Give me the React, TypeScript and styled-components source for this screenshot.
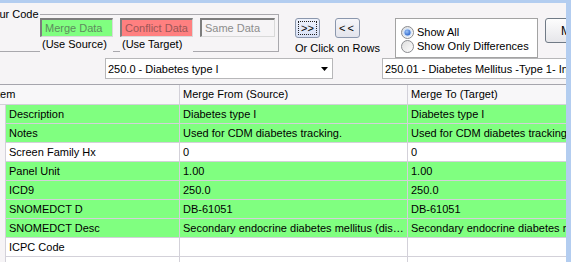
import React from 'react';
import styled, { createGlobalStyle } from 'styled-components';

const GlobalStyle = createGlobalStyle`
  html, body {
    margin: 0;
    padding: 0;
  }
  body {
    background: #b3cdf0;
    font-family: "Liberation Sans", Arial, sans-serif;
    font-size: 11px;
    color: #000;
    overflow: hidden;
  }
`;

const PAGE = '#f6f4f6';
const GREEN = '#80ff80';
const RED = '#ff8080';
const GRID_LINE = '#d3d1d9';

const Window = styled.div`
  width: 566px;
  height: 259px;
  margin-top: 3px;
  background: ${PAGE};
  overflow: hidden;
  display: flex;
  flex-direction: column;
`;

const TopArea = styled.div`
  display: flex;
  align-items: flex-start;
  height: 44px;
  margin-top: 11px;
  flex-shrink: 0;
`;

const GroupBox = styled.div`
  display: flex;
  align-items: flex-start;
  margin-left: -15px;
  padding: 0 3px 0 1px;
  border: 1px solid #a9a8ad;
  flex-shrink: 0;
`;

const Legend = styled.div`
  width: 53px;
  flex-shrink: 0;
  margin-top: -7px;
  line-height: 13px;
  background: ${PAGE};
  white-space: nowrap;
`;

const GroupColumn = styled.div`
  display: flex;
  flex-direction: column;
  margin-top: 3px;
`;

const BoxRow = styled.div`
  display: flex;
  gap: 7px;
`;

const DataBox = styled.div<{ $bg: string; $fg: string; $w: number }>`
  box-sizing: border-box;
  width: ${(p) => p.$w}px;
  height: 19px;
  line-height: 16px;
  padding-left: 3px;
  background: ${(p) => p.$bg};
  color: ${(p) => p.$fg};
  border: 1px solid;
  border-width: 2px 1px 1px 2px;
  border-color: #7d7d7d #d9d9d9 #d9d9d9 #7d7d7d;
  white-space: nowrap;
  overflow: hidden;
`;

const LabelRow = styled.div`
  display: flex;
  gap: 7px;
  margin-top: 1px;
  margin-bottom: -2px;
`;

const UseLabel = styled.div`
  width: 71px;
  height: 15px;
  line-height: 13px;
  padding-left: 2px;
  background: ${PAGE};
  white-space: nowrap;
`;

const ArrowColumn = styled.div`
  width: 80px;
  margin-left: 16px;
  margin-top: 4px;
  flex-shrink: 0;
`;

const ArrowRow = styled.div`
  display: flex;
  gap: 15px;
`;

const ArrowButton = styled.div<{ $focused?: boolean }>`
  box-sizing: border-box;
  width: 25px;
  height: 20px;
  border: 1px solid #8b97ad;
  border-radius: 3px;
  background: ${(p) => (p.$focused ? 'linear-gradient(#eef2fc, #d9e1f6)' : 'linear-gradient(#f6f6fa, #e3e4ec)')};
  display: flex;
  align-items: center;
  justify-content: center;
  padding: 2px;
`;

const FocusRect = styled.div<{ $focused?: boolean }>`
  flex: 1;
  align-self: stretch;
  display: flex;
  align-items: center;
  justify-content: center;
  border: 1px dotted ${(p) => (p.$focused ? '#222' : 'transparent')};
  letter-spacing: ${(p) => (p.$focused ? '0px' : '2px')};
  font-size: 11px;
  line-height: 12px;
`;

const Caption = styled.div`
  margin-top: 4px;
  line-height: 13px;
  white-space: nowrap;
`;

const RadioBox = styled.div`
  box-sizing: border-box;
  width: 143px;
  height: 40px;
  margin-left: 20px;
  margin-top: 4px;
  padding: 6px 0 0 5px;
  background: #fff;
  border: 1px solid #a3a3a3;
  flex-shrink: 0;
`;

const RadioRow = styled.div`
  display: flex;
  align-items: center;
  gap: 3px;
  height: 14px;
  white-space: nowrap;
`;

const BigButton = styled.div`
  box-sizing: border-box;
  width: 66px;
  height: 25px;
  margin-left: 7px;
  margin-top: 4px;
  padding-left: 15px;
  border: 1px solid #707a86;
  border-radius: 3px;
  background: linear-gradient(#fdfdfd, #e6e6ea);
  display: flex;
  align-items: center;
  flex-shrink: 0;
  font-size: 12px;
`;

const ComboRow = styled.div`
  display: flex;
  flex-shrink: 0;
`;

const Combo = styled.div<{ $w: number; $left: number }>`
  box-sizing: border-box;
  width: ${(p) => p.$w}px;
  height: 21px;
  margin-left: ${(p) => p.$left}px;
  padding: 0 4px 0 2px;
  background: #fff;
  border: 1px solid #b7b7b9;
  display: flex;
  align-items: center;
  flex-shrink: 0;
`;

const ComboText = styled.span`
  flex: 1;
  white-space: nowrap;
  overflow: hidden;
`;

const Grid = styled.div`
  margin-top: 5px;
  display: flex;
  flex-direction: column;
  flex: 1;
  overflow: hidden;
`;

const HeaderRow = styled.div`
  display: flex;
  flex-shrink: 0;
  height: 19px;
  border-top: 1px solid #a6a5ad;
  border-bottom: 1px solid ${GRID_LINE};
  background: #f8f7f9;
`;

const HeaderCell = styled.div<{ $w: number; $shift?: number }>`
  box-sizing: border-box;
  width: ${(p) => p.$w}px;
  flex-shrink: 0;
  padding-left: ${(p) => (p.$shift ? 0 : 3)}px;
  border-right: 1px solid ${GRID_LINE};
  line-height: 19px;
  white-space: nowrap;
  overflow: hidden;
  text-indent: ${(p) => p.$shift ?? 0}px;
`;

const DataRow = styled.div<{ $diff: boolean }>`
  display: flex;
  flex-shrink: 0;
  height: 18px;
  border-bottom: 1px solid ${GRID_LINE};
  background: ${(p) => (p.$diff ? GREEN : '#fff')};
`;

const RowHead = styled.div`
  width: 5px;
  flex-shrink: 0;
  background: ${PAGE};
  border-right: 1px solid ${GRID_LINE};
  margin-bottom: -1px;
`;

const Cell = styled.div<{ $w: number; $clip?: boolean }>`
  box-sizing: border-box;
  width: ${(p) => p.$w}px;
  flex-shrink: 0;
  padding: 0 3px;
  border-right: 1px solid ${GRID_LINE};
  line-height: 18px;
  white-space: nowrap;
  overflow: hidden;
  text-overflow: ${(p) => (p.$clip ? 'clip' : 'ellipsis')};
`;

const RadioIcon: React.FC<{ checked?: boolean }> = ({ checked }) => (
  <svg width="13" height="13" viewBox="0 0 13 13">
    <defs>
      <linearGradient id={checked ? 'rOn' : 'rOff'} x1="0" y1="0" x2="1" y2="1">
        <stop offset="0" stopColor="#dcdcdc" />
        <stop offset="1" stopColor="#ffffff" />
      </linearGradient>
      <radialGradient id="dot" cx="0.4" cy="0.35" r="0.7">
        <stop offset="0" stopColor="#9cc4f8" />
        <stop offset="1" stopColor="#2a62c9" />
      </radialGradient>
    </defs>
    <circle cx="6.5" cy="6.5" r="6" fill={`url(#${checked ? 'rOn' : 'rOff'})`} stroke="#8a8c90" />
    {checked && <circle cx="6.5" cy="6.5" r="4.3" fill="#cfe1f9" />}
    {checked && <circle cx="6.5" cy="6.5" r="3" fill="url(#dot)" />}
  </svg>
);

const ComboArrow = () => (
  <svg width="7" height="4" viewBox="0 0 7 4">
    <polygon points="0,0 7,0 3.5,4" fill="#000" />
  </svg>
);

const rows = [
  { name: 'Description', from: 'Diabetes type I', to: 'Diabetes type I', diff: true },
  { name: 'Notes', from: 'Used for CDM diabetes tracking.', to: 'Used for CDM diabetes tracking.', diff: true },
  { name: 'Screen Family Hx', from: '0', to: '0', diff: false },
  { name: 'Panel Unit', from: '1.00', to: '1.00', diff: true },
  { name: 'ICD9', from: '250.0', to: '250.0', diff: true },
  { name: 'SNOMEDCT D', from: 'DB-61051', to: 'DB-61051', diff: true },
  {
    name: 'SNOMEDCT Desc',
    from: 'Secondary endocrine diabetes mellitus (disorder)',
    to: 'Secondary endocrine diabetes mellitus (disorder)',
    diff: true,
  },
  { name: 'ICPC Code', from: '', to: '', diff: false },
  { name: 'ICPC Desc', from: '', to: '', diff: false },
];

const App: React.FC = () => {
  return (
    <>
      <GlobalStyle />
      <Window>
        <TopArea>
          <GroupBox>
            <Legend>Your Code</Legend>
            <GroupColumn>
              <BoxRow>
                <DataBox $bg={GREEN} $fg="#5e8c5e" $w={73}>Merge Data</DataBox>
                <DataBox $bg={RED} $fg="#9c5656" $w={73}>Conflict Data</DataBox>
                <DataBox $bg={PAGE} $fg="#8d8d8d" $w={75}>Same Data</DataBox>
              </BoxRow>
              <LabelRow>
                <UseLabel>(Use Source)</UseLabel>
                <UseLabel>(Use Target)</UseLabel>
              </LabelRow>
            </GroupColumn>
          </GroupBox>
          <ArrowColumn>
            <ArrowRow>
              <ArrowButton $focused>
                <FocusRect $focused>&gt;&gt;</FocusRect>
              </ArrowButton>
              <ArrowButton>
                <FocusRect>&lt;&lt;</FocusRect>
              </ArrowButton>
            </ArrowRow>
            <Caption>Or Click on Rows</Caption>
          </ArrowColumn>
          <RadioBox>
            <RadioRow>
              <RadioIcon checked />
              Show All
            </RadioRow>
            <RadioRow>
              <RadioIcon />
              Show Only Differences
            </RadioRow>
          </RadioBox>
          <BigButton>Merge</BigButton>
        </TopArea>
        <ComboRow>
          <Combo $w={228} $left={105}>
            <ComboText>250.0 - Diabetes type I</ComboText>
            <ComboArrow />
          </Combo>
          <Combo $w={200} $left={49}>
            <ComboText>250.01 - Diabetes Mellitus -Type 1- Insulin Dependent</ComboText>
          </Combo>
        </ComboRow>
        <Grid>
          <HeaderRow>
            <HeaderCell $w={180} $shift={-6}>Item</HeaderCell>
            <HeaderCell $w={228}>Merge From (Source)</HeaderCell>
            <HeaderCell $w={230}>Merge To (Target)</HeaderCell>
          </HeaderRow>
          {rows.map((r) => (
            <DataRow key={r.name} $diff={r.diff}>
              <RowHead />
              <Cell $w={174}>{r.name}</Cell>
              <Cell $w={228}>{r.from}</Cell>
              <Cell $w={230} $clip>{r.to}</Cell>
            </DataRow>
          ))}
        </Grid>
      </Window>
    </>
  );
};

export default App;
